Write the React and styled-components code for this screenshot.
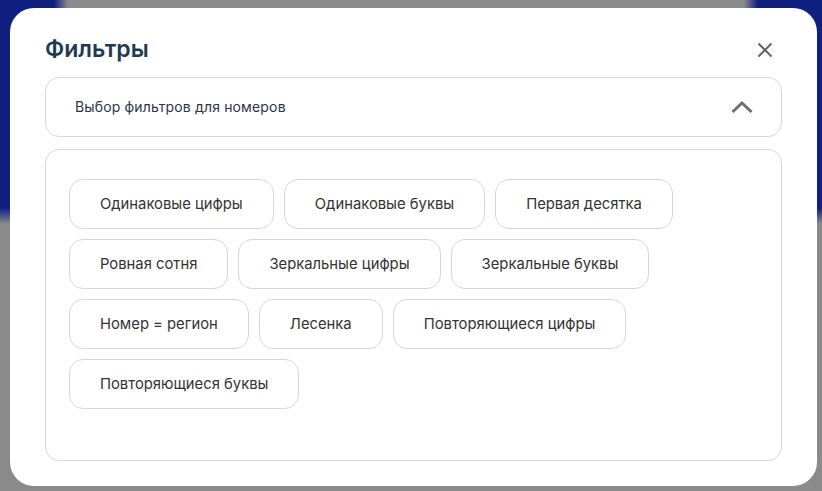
import React from 'react';
import styled, { createGlobalStyle } from 'styled-components';

const GlobalStyle = createGlobalStyle`
  html, body {
    margin: 0;
    padding: 0;
    height: 100%;
    overflow: hidden;
  }
  #root {
    height: 100%;
  }
`;

const Backdrop = styled.div`
  box-sizing: border-box;
  width: 822px;
  height: 491px;
  padding: 8px 5px 5px 10px;
  background:
    linear-gradient(90deg, #0f2080 0, #0f2080 54px, #8a8a8c 68px, #8a8a8c 744px, #0f2080 758px) top / 100% 8px no-repeat,
    linear-gradient(180deg, #0f2080 0, #0f2080 208px, #8a8a8a 224px);
  font-family: Inter, 'Noto Sans', sans-serif;
`;

const Modal = styled.div`
  box-sizing: border-box;
  height: 100%;
  padding: 24px 35px 25px;
  background: #fff;
  border-radius: 24px;
  display: flex;
  flex-direction: column;
`;

const Header = styled.div`
  display: flex;
  align-items: flex-start;
  justify-content: space-between;
  height: 45px;
`;

const Title = styled.h2`
  margin: 0;
  font-size: 23px;
  line-height: 34px;
  font-weight: 600;
  color: #1f3a52;
`;

const CloseButton = styled.button`
  border: 0;
  padding: 0;
  background: none;
  display: flex;
  color: #666;
`;

const Panel = styled.div`
  box-sizing: border-box;
  border: 1px solid #d5d7dc;
  border-radius: 14px;
`;

const Accordion = styled(Panel)`
  height: 60px;
  padding: 0 28px 0 29px;
  display: flex;
  align-items: center;
  justify-content: space-between;
`;

const AccordionLabel = styled.span`
  font-size: 14px;
  line-height: 20px;
  letter-spacing: 0.15px;
  color: #2b3646;
  margin-top: -1px;
`;

const Options = styled(Panel)`
  flex: 1;
  margin-top: 12px;
  padding: 29px 23px;
  display: flex;
  flex-wrap: wrap;
  align-content: flex-start;
  gap: 10px;
`;

const Chip = styled.button`
  box-sizing: border-box;
  height: 50px;
  padding: 0 30px 1px;
  background: #fff;
  border: 1px solid #d5d7dc;
  border-radius: 14px;
  font: 400 14.8px/20px Inter, 'Noto Sans', sans-serif;
  color: #333;
`;

const chips = [
  'Одинаковые цифры',
  'Одинаковые буквы',
  'Первая десятка',
  'Ровная сотня',
  'Зеркальные цифры',
  'Зеркальные буквы',
  'Номер = регион',
  'Лесенка',
  'Повторяющиеся цифры',
  'Повторяющиеся буквы',
];

export default function App() {
  return (
    <>
      <GlobalStyle />
      <Backdrop>
        <Modal>
          <Header>
            <Title>Фильтры</Title>
            <CloseButton>
              <svg width="36" height="36" viewBox="0 0 36 36" fill="none" stroke="currentColor" strokeWidth="2">
                <path d="M12.5 11.5 L25.5 24.5 M25.5 11.5 L12.5 24.5" />
              </svg>
            </CloseButton>
          </Header>
          <Accordion>
            <AccordionLabel>Выбор фильтров для номеров</AccordionLabel>
            <svg width="22" height="14" viewBox="0 0 22 14" fill="none" stroke="#6f6f6f" strokeWidth="3">
              <path d="M1.5 12 L11 3 L20.5 12" />
            </svg>
          </Accordion>
          <Options>
            {chips.map(chip => (
              <Chip key={chip}>{chip}</Chip>
            ))}
          </Options>
        </Modal>
      </Backdrop>
    </>
  );
}
